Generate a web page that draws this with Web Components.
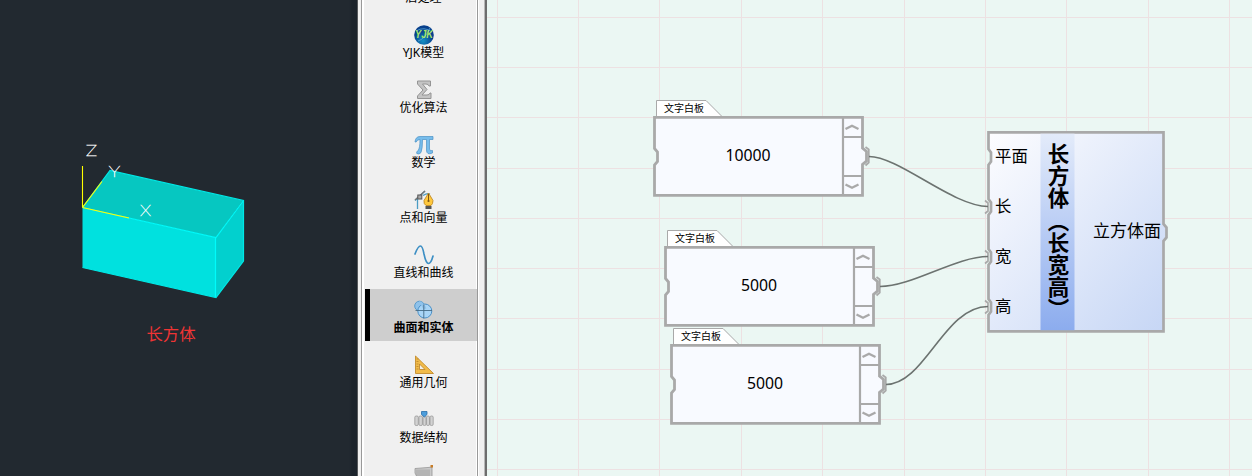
<!DOCTYPE html>
<html lang="zh-CN">
<head>
<meta charset="utf-8">
<title>参数化建模</title>
<style>
html,body{margin:0;height:100%;overflow:hidden}
body{font-family:"Noto Sans","Noto Sans CJK SC",sans-serif;color:#000}
</style>
</head>
<body>
<app-shell>
  <cad-view slot="view"></cad-view>
  <tool-list slot="tools">
    <tool-item icon="post">后处理</tool-item>
    <tool-item icon="yjk">YJK模型</tool-item>
    <tool-item icon="sum">优化算法</tool-item>
    <tool-item icon="pi">数学</tool-item>
    <tool-item icon="pen">点和向量</tool-item>
    <tool-item icon="sine">直线和曲线</tool-item>
    <tool-item icon="solid" selected>曲面和实体</tool-item>
    <tool-item icon="ruler">通用几何</tool-item>
    <tool-item icon="data">数据结构</tool-item>
    <tool-item icon="mesh"></tool-item>
  </tool-list>
  <node-canvas slot="canvas">
    <text-board style="left:166px;top:99px">10000</text-board>
    <text-board style="left:177px;top:229px">5000</text-board>
    <text-board style="left:183px;top:327px">5000</text-board>
    <box-node style="left:500px;top:131px">
      <span slot="in">平面</span><span slot="in">长</span><span slot="in">宽</span><span slot="in">高</span>
      <span slot="title">长方体（长宽高）</span>
      <span slot="out">立方体面</span>
    </box-node>
  </node-canvas>
</app-shell>
<script>
function define(name, html, setup){
  customElements.define(name, class extends HTMLElement{
    constructor(){
      super();
      const t=document.createElement('template');
      t.innerHTML=html;
      this.attachShadow({mode:'open'}).append(t.content.cloneNode(true));
    }
    connectedCallback(){ if(setup) setup(this,this.shadowRoot); }
  });
}

define('app-shell',`
<style>:host{display:grid;grid-template-columns:358px 129px 1fr;width:1252px;height:476px;overflow:hidden}
::slotted(*){min-width:0;height:476px}</style>
<slot name="view"></slot><slot name="tools"></slot><slot name="canvas"></slot>`);

define('cad-view',`
<style>:host{display:block;background:linear-gradient(90deg,#222930 349px,#1b232b 352px,#1b232b 357px,#56595c 357px)}svg{display:block}
text{font-family:Lato,"Noto Sans",sans-serif;font-weight:100;font-size:16px;fill:#fff;stroke:#fff;stroke-width:.45;text-anchor:middle}
.cap{font-family:"Noto Sans CJK SC",sans-serif;font-weight:400;font-size:16.4px;fill:#f03434;stroke:none}</style>
<svg width="358" height="476" viewBox="0 0 358 476">
<path d="M82.5 207.5 110 170.500 243 200.500 216 237.500Z" fill="#06c7c1"/>
<path d="M82.500 207.500 216 237.500V297.500L82.500 267.500Z" fill="#00e1df"/>
<path d="M216 237.500 243.500 200.500V261L216 297.500Z" fill="#02d0ce"/>
<g fill="none" stroke="#00fbfb" stroke-width="1.200"><path d="M82.500 207.500 216 237.500 243.500 200.500M215.500 237.500V297.500"/><path stroke="#00e8e6" d="M82.500 207.500 110 170.500 243.500 200.500V261L216 297.500 82.500 267.500"/></g>
<path d="M82.500 166V207.500M82.500 207.500 102 181.500M82.500 207.500 129 218" fill="none" stroke="#ff0" stroke-width="1.100"/>
<text transform="translate(91.500 156) scale(1.200 1)">Z</text><text transform="translate(114.500 177) scale(1.250 1)">Y</text><text transform="translate(145.500 216) scale(1.150 1)">X</text>
<text class="cap" x="171" y="340">长方体</text>
</svg>`);

define('tool-list',`
<style>:host{display:flex;justify-content:center;box-sizing:border-box;padding:0 7px 0 3px;background:#f0f0f0;overflow:hidden;border-right:2px solid #6d6d6d;box-shadow:inset -1px 0 #b8b8b8}
.in{box-sizing:border-box;width:120px;height:476px;border-left:1px solid #999;border-right:1px solid #999;background:#f0f0f0;box-shadow:inset 2px 0 #fff,inset -1px 0 #fff,1px 0 #fff;padding:0 2px 0 3px;overflow:hidden}
.col{display:flex;flex-direction:column;gap:3px;margin-top:-41px}</style>
<div class="in"><div class="col"><slot></slot></div></div>`);

const ICONS={
post:'',
yjk:'<defs><radialGradient id="g" cx=".45" cy=".8"><stop offset="0" stop-color="#1590c4"/><stop offset="1" stop-color="#08408c"/></radialGradient></defs><circle cx="10" cy="10" r="9.800" fill="url(#g)"/><path d="M2 6Q10 1 18 7M4 16Q11 14 16 3" stroke="#5aa9d8" stroke-width=".8" fill="none"/><text x="10" y="13.300" text-anchor="middle" font-family="Liberation Sans" font-weight="bold" font-style="italic" font-size="10" textLength="18" lengthAdjust="spacingAndGlyphs" fill="#a8e66a">YJK</text>',
sum:'<path d="M3.500 1H16.500V6H15Q14.500 4 12 4H8.500L13 9.500 8 15H13Q15.500 15 16 13H17V18.500H3.500V16L9 10 3.500 4Z" fill="#c4c4c4" stroke="#949494" stroke-width="1"/>',
pi:'<path d="M1 7Q1.500 1.500 6 1.500H19V4.500H15.500V14Q15.500 16.500 18.500 15.500V18Q12.500 20.500 12.500 15V4.500H8.500Q8.500 14 7 17.500 5 20 2.800 18.500 2 17 4 15.500 6 13.500 6 4.500 3 4.500 2.200 7Z" fill="#77bdec" stroke="#4a90c4" stroke-width=".7"/>',
pen:'<path d="M3.500 19V9M1 10.500 11 1M9 5.500Q13 3 16 4" stroke="#4b9cc4" stroke-width="1.300" fill="none"/><path d="M1 10 11 1" stroke="#777" stroke-width="1.500"/><rect x="3.800" y="5" width="4" height="4" fill="#aaa" stroke="#555"/><path d="M14.500 3 19 10.500Q19 14 17 15.500H12Q9.500 14 10 10.500Z" fill="#ffc83d" stroke="#b98018" stroke-width=".8"/><path d="M14.500 4V11" stroke="#7c5512"/><circle cx="14.500" cy="11" r="1.100" fill="#7c5512"/><rect x="11.500" y="16" width="6" height="3" fill="#555"/>',
sine:'<path d="M1 9Q4 1 6.500 1Q8.500 1 10 9Q12 18.500 14.500 18.500Q17 18.500 19 11" fill="none" stroke="#3d8fc4" stroke-width="1.700" stroke-linecap="round"/>',
solid:'<circle cx="5.500" cy="6" r="4.800" fill="#8fc2ea" stroke="#5a9bcb"/><circle cx="10.800" cy="11" r="7" fill="#a9d5f6" stroke="#4b91c8"/><path d="M5 2.500Q9 4 11 9" stroke="#8fc2ea" stroke-width="3" fill="none"/><path d="M9.800 4.500V18.500M1.500 10.500H18" stroke="#456b86" stroke-width=".9"/>',
ruler:'<path d="M1.500 1V18.500H19.500Z" fill="#f1bb4a" stroke="#c38c2c" stroke-width=".9"/><path d="M5.500 9V14.500H11Z" fill="#f3f1eb" stroke="#b98126" stroke-width=".8"/><path d="M2.500 4H4.500M2.500 6.500H4.500M2.500 9H4.500M2.500 11.500H4.500M2.500 14H4.500" stroke="#a8741b" stroke-width=".6"/>',
data:'<g fill="#d2d2d2" stroke="#999" stroke-width=".8"><rect x=".8" y="6" width="3.500" height="9.500" rx="1.300"/><rect x="4.900" y="6" width="3.500" height="9.500" rx="1.300"/><rect x="9" y="6" width="3" height="9.500" rx="1.300"/><rect x="12.500" y="6" width="3" height="9.500" rx="1.300"/><rect x="16" y="6" width="3.200" height="9.500" rx="1.300"/></g><path d="M7.500 1.500H13V4.500L10.300 7 7.500 4.500Z" fill="#4c9ddb" stroke="#286da8" stroke-width=".8"/>',
mesh:'<path d="M1 3.500 14 2.500 18 2V14H4L1 8Z" fill="#c9c9c9" stroke="#969696" stroke-width=".8"/><path d="M3 4V12M5 4V14M7 4V14M9 4V14M11 4V14M13 4V14M15 4V14M2 6H16M2 8H16M2 10H16" stroke="#999" stroke-width=".5"/><rect x="16.500" y="0" width="2.500" height="2.500" fill="#c87c25"/>'
};
define('tool-item',`
<style>:host{display:flex;flex:none;flex-direction:column;align-items:center;box-sizing:border-box;width:112px;height:52px;padding-top:11px;border-left:5px solid transparent;font:12px/16px "Noto Sans","Noto Sans CJK SC",sans-serif;white-space:nowrap}
:host([selected]){background:#cecece;border-left-color:#000;font-weight:700}
svg{display:block;flex:none}</style>
<svg width="20" height="20" viewBox="0 0 20 20"></svg><span><slot></slot></span>`,
(h,r)=>{r.querySelector('svg').innerHTML=ICONS[h.getAttribute('icon')]||'';});

define('node-canvas',`
<style>:host{display:block;position:relative;overflow:hidden;background:#ebf7f3}svg{position:absolute;left:0;top:0}
.wires{z-index:3;pointer-events:none}</style>
<svg width="765" height="476" class="grid"></svg><slot></slot>
<svg class="wires" width="765" height="476" fill="none" stroke="#6c7370" stroke-width="1.600">
<path d="M382 156.500C412 156.500 466 206.500 501 206.500M393 286.500C425 286.500 469 256.500 501 256.500M399 384.500C438 384.500 457 306.500 501 306.500"/></svg>`,
(h,r)=>{
  let s='';
  for(const x of [10,91,172,254,335,417,498,579,661,742]) s+='<rect x="'+x+'" y="0" width="1" height="476"/>';
  for(const y of [17,67,117,168,218,268,318,369,419,469]) s+='<rect x="0" y="'+y+'" width="765" height="1"/>';
  r.querySelector('.grid').innerHTML='<g fill="#ede1e2">'+s+'</g>';
});

define('text-board',`
<style>:host{position:absolute;display:grid;grid-template-columns:190px 27px;grid-template-rows:18px 79px;width:217px}
svg{position:absolute;left:0;top:0}
.tab{position:relative;grid-column:1/3;font:10px/18px "Noto Sans CJK SC",sans-serif;padding-left:11px}
.val{position:relative;display:flex;box-sizing:border-box;height:79px;align-items:center;justify-content:center;font:15.800px/22px "Noto Sans",sans-serif;padding-bottom:3px}</style>
<svg width="220" height="99" fill="none" stroke="#a9a9a9">
<path d="M3.500 18V1.500H53L68.500 17" fill="#fff" stroke-width="1"/>
<path d="M1.500 18.300H209.500V49L213.500 52.500V62L209.500 65.500V96.300H1.500V66L4.500 62.500V53L1.500 49.500Z" fill="#f8faff" stroke-width="2.800"/>
<path d="M190 19V96M190 38H209M190 77H209" stroke-width="2.200"/>
<path d="M192.500 30 199 26.800 205.500 30M192.500 85.500 199 88.700 205.500 85.500" stroke-width="2.300"/>
<path d="M212.500 48L215.800 50.500V63.500L212.500 66.500" stroke-width="1.700"/>
</svg>
<div class="tab">文字白板</div><div class="val"><slot></slot></div>`);

define('box-node',`
<style>:host{position:absolute;display:grid;grid-template-columns:54px 34px 90px;width:178px;height:202px;font:16.400px/24px "Noto Sans CJK SC",sans-serif}
svg{position:absolute;left:0;top:0;overflow:visible}
.in{position:relative;display:flex;flex-direction:column;gap:26px;padding:12px 0 0 8px}
.t{position:relative;display:flex;justify-content:center;padding-top:12px}
::slotted([slot=title]){writing-mode:vertical-rl;font-weight:700;font-size:21.500px;letter-spacing:.7px;line-height:24px;white-space:nowrap}
.o{position:relative;display:flex;align-items:center;justify-content:flex-end;padding-right:4px;padding-bottom:5px;white-space:nowrap;font-size:17px}</style>
<svg width="184" height="202" fill="none" stroke="#a9a9a9">
<defs><linearGradient id="b" x1="0" y1="0" x2="1" y2="1"><stop offset="0" stop-color="#fdfdff"/><stop offset="1" stop-color="#c6d6f5"/></linearGradient>
<linearGradient id="c" x1="0" y1="0" x2="0" y2="1"><stop offset="0" stop-color="#e3ebfa"/><stop offset="1" stop-color="#8cacee"/></linearGradient></defs>
<path fill="url(#b)" class="edge" stroke-width="2.700"/>
<rect x="53.500" y="2.700" width="34" height="196.500" fill="url(#c)" stroke="none"/>
<path class="plug" stroke-width="1.700"/>
</svg>
<div class="in"><slot name="in"></slot></div><div class="t"><slot name="title"></slot></div><div class="o"><slot name="out"></slot></div>`,
(h,r)=>{
  let d='M1.500 1.400H176.500V93L179.500 96.500V106.500L176.500 110V200.400H1.500',p='';
  for(const y of [176,126,76,26]) d+='V'+(y+8)+'L4 '+(y+4.5)+'V'+(y-4.5)+'L1.500 '+(y-8);
  for(const y of [176,126,76]) p+='M-2 '+(y-6.500)+'L1 '+(y-4)+'V'+(y+4)+'L-2 '+(y+6.500);
  r.querySelector('.edge').setAttribute('d',d+'Z');
  r.querySelector('.plug').setAttribute('d',p);
});
</script>
</body>
</html>
